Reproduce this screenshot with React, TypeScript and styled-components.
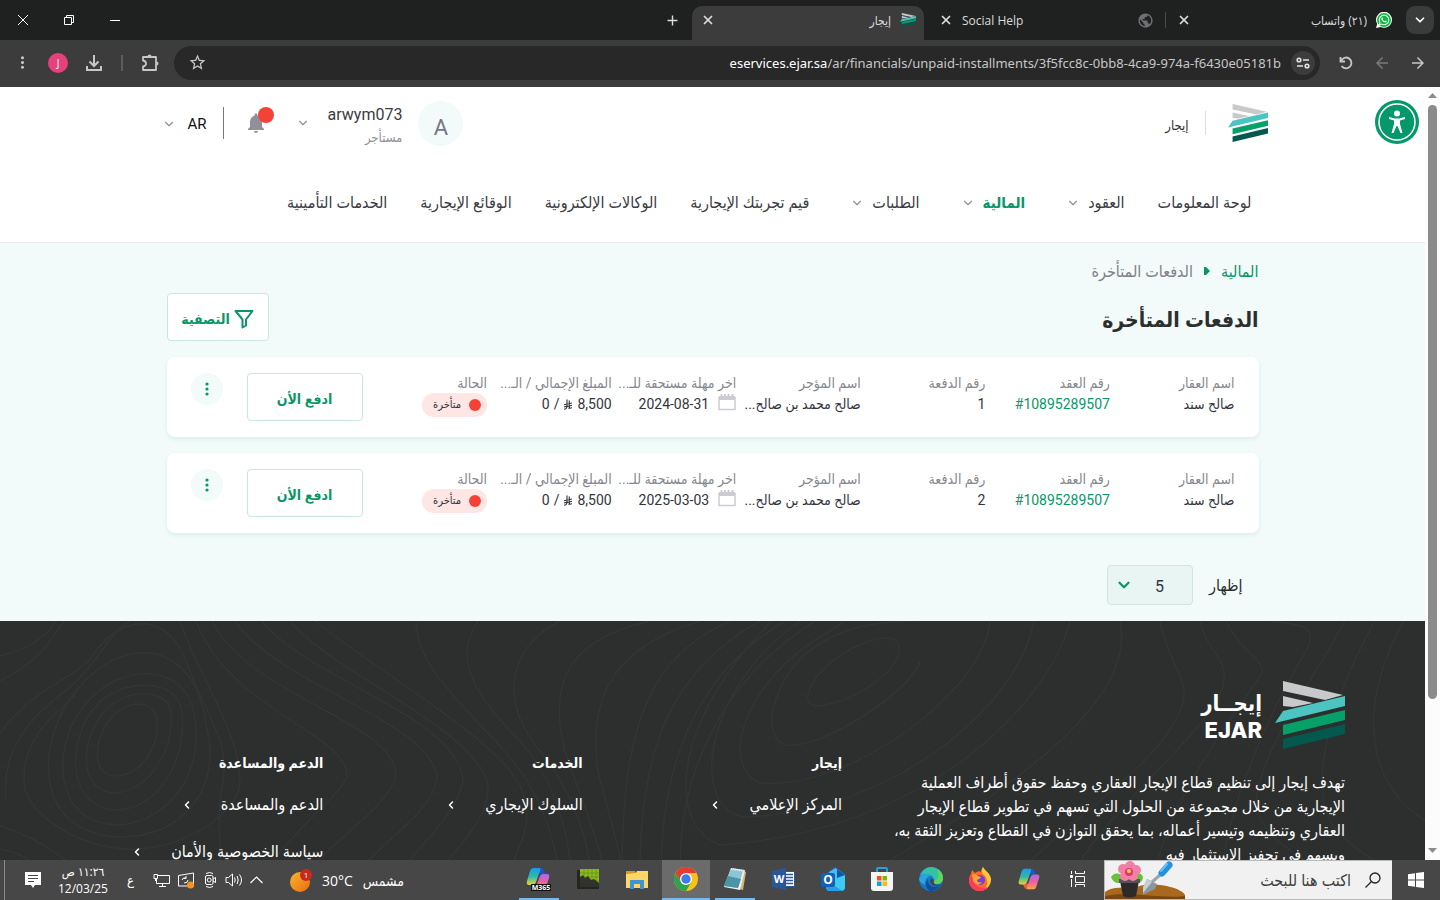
import React from 'react';
import styled, { createGlobalStyle } from 'styled-components';
import {
    MdAdd,
    MdArrowBack,
    MdArrowForward,
    MdMoreVert,
    MdNotifications,
    MdPublic,
    MdStarBorder,
} from 'react-icons/md';
import { FaWhatsapp } from 'react-icons/fa';
import { ChevronDown, ChevronLeft, X } from 'lucide-react';

const pageFont = `Roboto, 'DejaVu Sans Condensed', 'DejaVu Sans', sans-serif`;
const systemFont = `'Open Sans', 'DejaVu Sans Condensed', 'DejaVu Sans', sans-serif`;

const green = '#0a9668';

const GlobalStyle = createGlobalStyle`
    * {
        box-sizing: border-box;
    }
    html, body, #root {
        height: 100%;
    }
    body {
        margin: 0;
        overflow: hidden;
        font-family: ${pageFont};
        color: #2d2e2e;
    }
    button, input, select {
        font: inherit;
        color: inherit;
    }
    button {
        border: none;
        background: none;
        padding: 0;
        cursor: pointer;
    }
    a {
        color: inherit;
        text-decoration: none;
    }
    svg {
        display: block;
        flex-shrink: 0;
    }
    ul, dl, dd, p, h1, h2 {
        margin: 0;
        padding: 0;
        list-style: none;
    }
`;

const Desktop = styled.div`
    display: grid;
    grid-template-columns: minmax(0, 1fr);
    grid-template-rows: auto auto minmax(0, 1fr) auto;
    height: 100%;
`;

/* ---------- browser ---------- */

const TabStrip = styled.div`
    display: flex;
    align-items: stretch;
    height: 40px;
    padding-right: 6px;
    background: #1f2121;
    color: #dcdcdc;
    font-family: ${systemFont};
    font-size: 12px;
`;

const TabSearch = styled.button`
    display: flex;
    align-items: center;
    justify-content: center;
    align-self: center;
    width: 28px;
    height: 28px;
    margin-left: 6px;
    border-radius: 9px;
    background: #3a3b3b;
    color: #fff;
`;

const Tab = styled.div<{ $active?: boolean }>`
    display: flex;
    align-items: center;
    gap: 9px;
    width: ${props => (props.$active ? 232 : 238)}px;
    margin-top: ${props => (props.$active ? 6 : 0)}px;
    padding: 0 8px 0 ${props => (props.$active ? 9 : 15)}px;
    padding-bottom: ${props => (props.$active ? 6 : 0)}px;
    border-radius: 10px 10px 0 0;
    background: ${props => (props.$active ? '#3c3c3c' : 'transparent')};
`;

const TabTitle = styled.span<{ $ltr?: boolean }>`
    flex: 1;
    direction: ${props => (props.$ltr ? 'ltr' : 'rtl')};
    white-space: nowrap;
    overflow: hidden;
`;

const TabClose = styled.button`
    display: flex;
`;

const TabDivider = styled.span`
    align-self: center;
    width: 1px;
    height: 16px;
    margin: 0 -4px 0 3px;
    background: #4a4b4b;
`;

const NewTab = styled.button`
    display: flex;
    align-items: center;
    margin: 0 11px;
    color: #dcdcdc;
`;

const WindowControls = styled.div`
    display: flex;
    margin-right: auto;
`;

const WindowControl = styled.button`
    display: flex;
    align-items: center;
    justify-content: center;
    width: 46px;
    color: #fff;
`;

const Toolbar = styled.div`
    display: flex;
    align-items: center;
    height: 47px;
    padding: 0 4px 2px;
    background: #3c3c3c;
    color: #c7c7c7;
`;

const ToolButton = styled.button<{ $dim?: boolean }>`
    display: flex;
    align-items: center;
    justify-content: center;
    width: 36px;
    height: 34px;
    opacity: ${props => (props.$dim ? 0.45 : 1)};
`;

const ToolDivider = styled.span`
    width: 2px;
    height: 16px;
    margin: 0 9px;
    background: #5c5c5c;
`;

const Profile = styled.button`
    width: 20px;
    height: 20px;
    margin: 0 8px;
    border-radius: 50%;
    background: #e8407d;
    color: #fff;
    font-family: ${systemFont};
    font-size: 10px;
`;

const AddressBar = styled.div`
    display: flex;
    align-items: center;
    flex: 1;
    height: 34px;
    margin: 0 8px 0 6px;
    padding: 0 5px 0 14px;
    border-radius: 17px;
    background: #282828;
`;

const SiteInfo = styled.button`
    display: flex;
    align-items: center;
    justify-content: center;
    width: 24px;
    height: 24px;
    border-radius: 50%;
    background: #3c3c3c;
    color: #e3e3e3;
`;

const Address = styled.div`
    flex: 1;
    margin: 0 10px;
    direction: ltr;
    text-align: right;
    white-space: nowrap;
    color: #c7c7c7;
    font-family: 'Noto Sans', ${systemFont};
    font-size: 13px;
`;

const Host = styled.span`
    color: #fff;
`;

/* ---------- page ---------- */

const Viewport = styled.div`
    position: relative;
    display: flex;
    min-height: 0;
    overflow: hidden;
`;

const Page = styled.div`
    display: flex;
    flex-direction: column;
    flex: 1;
    min-width: 0;
    overflow: hidden;
    background: #f2fbfa;
`;

const Scrollbar = styled.div`
    display: flex;
    flex-direction: column;
    align-items: center;
    width: 15px;
    padding: 6px 0;
    background: #fcfcfc;
`;

const ScrollThumb = styled.div`
    flex: 0 1 594px;
    width: 9px;
    margin: 6px 0 auto;
    border-radius: 5px;
    background: #8b8b8b;
`;

const AccessibilityButton = styled.button`
    position: absolute;
    top: 13px;
    right: 21px;
`;

const Header = styled.header`
    flex-shrink: 0;
    background: #fff;
    border-bottom: 1px solid #e3ecec;
`;

const HeaderTop = styled.div`
    display: flex;
    align-items: center;
    max-width: 1110px;
    height: 72px;
    margin: 0 auto;
    padding-left: 4px;
`;

const BrandLink = styled.a`
    display: flex;
    align-items: center;
    gap: 16px;
    font-size: 13px;
`;

const BrandText = styled.span`
    padding-top: 4px;
`;

const Rule = styled.span`
    width: 1px;
    height: 32px;
    background: #77787c;
`;

const BrandRule = styled(Rule)`
    height: 24px;
    margin-right: 6px;
    background: #dcdfe2;
`;

const UserButton = styled.button`
    display: flex;
    align-items: center;
    gap: 16px;
    margin-right: auto;
    color: #8f909a;
`;

const Avatar = styled.span`
    display: flex;
    align-items: center;
    justify-content: center;
    width: 45px;
    height: 45px;
    padding-top: 8px;
    border-radius: 50%;
    background: #f2fbfa;
    color: #77787f;
    font-size: 22px;
`;

const UserText = styled.span`
    display: flex;
    flex-direction: column;
    align-items: flex-start;
    gap: 3px;
    padding: 7px 0 0 2px;
    font-size: 13px;
    line-height: 20px;
`;

const UserName = styled.span`
    color: #3b3b44;
    font-size: 16px;
`;

const BellButton = styled.button`
    position: relative;
    margin: 0 28px 0 20px;
    color: #8f909a;
`;

const BellDot = styled.span`
    position: absolute;
    top: -4px;
    right: -6px;
    width: 16px;
    height: 16px;
    border-radius: 50%;
    background: #f44336;
`;

const LanguageButton = styled.button`
    display: flex;
    align-items: center;
    gap: 12px;
    margin-right: 16px;
    padding-top: 2px;
    font-size: 15px;
    color: #111;
`;

const MutedChevron = styled(ChevronDown)`
    color: #8f909a;
`;

const Nav = styled.nav`
    display: flex;
    align-items: center;
    gap: 33px;
    max-width: 1110px;
    height: 83px;
    margin: 0 auto;
    padding: 4px 16px 0 0;
`;

const NavLink = styled.a<{ $active?: boolean; $menu?: boolean }>`
    display: flex;
    align-items: center;
    gap: 8px;
    margin-left: ${props => (props.$menu ? 8 : 0)}px;
    white-space: nowrap;
    font-size: ${props => (props.$active ? 15 : 16)}px;
    font-weight: ${props => (props.$active ? 700 : 400)};
    color: ${props => (props.$active ? green : '#3b3b44')};
`;

const Main = styled.main`
    flex-shrink: 0;
    width: 100%;
    max-width: 1092px;
    margin: 0 auto;
    padding: 16px 0;
`;

const Breadcrumb = styled.nav`
    display: flex;
    align-items: center;
    gap: 11px;
    height: 24px;
    font-size: 16px;
    color: #7f8088;
`;

const BreadcrumbLink = styled.a`
    color: ${green};
`;

const TitleRow = styled.div`
    display: flex;
    align-items: center;
    justify-content: space-between;
    margin: 10px 0 16px;
`;

const Title = styled.h1`
    padding-top: 6px;
    font-size: 21px;
    line-height: 32px;
`;

const OutlineButton = styled.button`
    display: flex;
    align-items: center;
    justify-content: center;
    gap: 4px;
    width: 116px;
    height: 48px;
    padding-top: 4px;
    border: 1px solid #cbe5e0;
    border-radius: 4px;
    background: #fff;
    color: ${green};
    font-size: 14px;
    font-weight: 700;
`;

const FilterButton = styled(OutlineButton)`
    width: 102px;
`;

const CardList = styled.ul`
    display: flex;
    flex-direction: column;
    gap: 16px;
`;

const Card = styled.li`
    display: flex;
    align-items: flex-start;
    gap: 24px;
    height: 80px;
    padding: 16px 24px;
    border-radius: 8px;
    background: #fff;
    box-shadow: 0 2px 4px #d9edea;
`;

const Fields = styled.dl`
    display: grid;
    grid-template-columns: repeat(7, minmax(0, 1fr));
    flex: 1;
    margin-left: -24px;
`;

const Field = styled.div`
    min-width: 0;
    white-space: nowrap;
    line-height: 21px;
`;

const FieldLabel = styled.dt`
    font-size: 14px;
    color: #85868e;
`;

const FieldValue = styled.dd`
    display: flex;
    align-items: center;
    gap: 4px;
    height: 21px;
    font-size: 14px;
    color: #33343b;
`;

const DateValue = styled(FieldValue)`
    gap: 9px;

    svg {
        margin-bottom: 6px;
    }
`;

const ContractLink = styled.a`
    color: ${green};
`;

const Status = styled.span`
    display: flex;
    align-items: center;
    gap: 8px;
    height: 24px;
    padding: 0 6px 0 11px;
    border-radius: 12px;
    background: #fde6e4;
    font-size: 11px;
`;

const StatusDot = styled.span`
    width: 12px;
    height: 12px;
    border-radius: 50%;
    background: #f44336;
`;

const MoreButton = styled.button`
    display: flex;
    align-items: center;
    justify-content: center;
    width: 32px;
    height: 32px;
    border-radius: 50%;
    background: #f2fbfa;
    color: ${green};
`;

const PageSize = styled.label`
    display: flex;
    align-items: center;
    gap: 16px;
    margin-top: 32px;
    padding-right: 16px;
    font-size: 16px;
`;

const SelectBox = styled.span`
    position: relative;
    width: 86px;
    color: ${green};

    svg {
        position: absolute;
        top: 11px;
        left: 8px;
        pointer-events: none;
    }
`;

const Select = styled.select`
    appearance: none;
    width: 100%;
    height: 40px;
    padding: 3px 28px 0 0;
    border: 1px solid #cfe5e1;
    border-radius: 4px;
    background: #e8f5f3;
    color: #33343b;
    font-size: 16px;
`;

/* ---------- footer ---------- */

const Footer = styled.footer`
    position: relative;
    flex: 1 0 auto;
    padding: 60px 80px 0;
    background: #2d2e2e;
    color: #fff;
`;

const Contours = styled.svg`
    position: absolute;
    inset: 0;
    width: 100%;
    fill: none;
    stroke: #333535;
    stroke-width: 1.5;
`;

const FooterGrid = styled.div`
    position: relative;
    display: grid;
    grid-template-columns: 487px repeat(3, minmax(0, 1fr));
    column-gap: 16px;
`;

const FooterBrand = styled.div`
    display: flex;
    align-items: center;
    gap: 13px;
    height: 68px;
    margin-bottom: 22px;
`;

const WordMark = styled.div`
    display: flex;
    flex-direction: column;
    padding-top: 3px;
    font-weight: 700;
    font-size: 22px;
    line-height: 26px;
`;

const LatinMark = styled.span`
    font-family: Inter, sans-serif;
    font-weight: 800;
`;

const FooterText = styled.p`
    white-space: nowrap;
    font-size: 16px;
    line-height: 24px;
`;

const FooterColumn = styled.div`
    padding-top: 70px;
    font-size: 16px;
    line-height: 24px;
`;

const FooterHeading = styled.h2`
    margin-bottom: 18px;
    font-size: 14px;
    font-weight: 700;
`;

const FooterItem = styled.li`
    margin-bottom: 23px;
`;

const FooterLink = styled.a`
    display: flex;
    align-items: center;
    gap: 28px;
    white-space: nowrap;
`;

/* ---------- taskbar ---------- */

const Taskbar = styled.div`
    display: flex;
    align-items: stretch;
    height: 40px;
    background: #474747;
    color: #fff;
    font-family: ${systemFont};
    font-size: 13px;
`;

const StartButton = styled.button`
    display: flex;
    align-items: center;
    justify-content: center;
    width: 48px;
`;

const SearchBox = styled.label`
    display: flex;
    align-items: center;
    width: 288px;
    padding-right: 11px;
    background: #f1f1f1;
    border: 1px solid #b9b9b9;
    border-right-width: 0;
    color: #222;
`;

const SearchInput = styled.input`
    flex: 1;
    min-width: 0;
    margin-right: 12px;
    border: none;
    background: none;
    outline: none;
    font-size: 16px;

    &::placeholder {
        color: #3d3d3d;
        opacity: 1;
    }
`;

const Apps = styled.div`
    display: flex;
    gap: 1px;
    padding-right: 2px;
`;

const AppButton = styled.button<{ $open?: boolean; $focused?: boolean }>`
    display: flex;
    align-items: center;
    justify-content: center;
    width: ${props => (props.$open && !props.$focused ? 40 : 48)}px;
    margin: 0 ${props => (props.$open && !props.$focused ? 4 : 0)}px;
    border-bottom: 2px solid ${props => (props.$open ? '#76b9ed' : 'transparent')};
    background: ${props => (props.$focused ? '#6b6b6b' : 'transparent')};
`;

const Tray = styled.div`
    display: flex;
    align-items: center;
    gap: 7px;
    margin-right: auto;
    padding-left: 4px;
`;

const Weather = styled.button`
    display: flex;
    align-items: center;
    gap: 10px;
    margin-left: 20px;
    font-size: 14px;
`;

const Language = styled.span`
    margin: 0 12px 0 8px;
`;

const Clock = styled.div`
    display: flex;
    flex-direction: column;
    align-items: center;
    margin: 0 4px 0 10px;
    font-size: 12px;
    line-height: 17px;
`;

const TrayEdge = styled.span`
    width: 1px;
    height: 100%;
    margin-right: 13px;
    background: #8a8a8a;
`;

const EjarMark = ({ width, height }: { width: number; height: number }) => (
    <svg width={width} height={height} viewBox="0 0 70 68" preserveAspectRatio="none" aria-hidden="true">
        <path fill="#c8c9cb" d="M8 0L68 14 50 19 8 10ZM8 15L38 22 18 26 8 25Z" />
        <path fill="#4bc4c2" d="M70 15V25L0 42 8 30Z" />
        <path fill="#06a06b" d="M70 29V39L8 54V44Z" />
        <path fill="#03594e" d="M70 43V53L8 68V58Z" />
    </svg>
);

const SmallChevron = () => <MutedChevron size={14} strokeWidth={2} />;

const ContourLines = () => (
    <Contours viewBox="0 0 1425 279" aria-hidden="true">
        <path d="M157 100C155 78 128 78 112 96C92 118 92 155 115 155C140 155 160 126 157 100Z" />
        <path d="M171 92C168 66 125 66 103 92C80 120 78 172 116 172C148 170 174 130 171 92Z" />
        <path d="M182 92C180 56 120 56 95 86C66 120 66 189 118 189C160 186 186 140 182 92Z" />
        <path d="M194 92C185 42 122 42 88 80C52 118 48 204 120 204C170 200 206 150 194 92Z" />
        <path d="M206 104C196 20 124 10 76 70C36 118 30 216 124 216C190 214 222 160 206 104Z" />
        <path d="M0 60C40 40 50 20 64 0M0 35C30 28 48 14 56 0M0 112C40 60 76 60 96 30C124 -8 168 -8 186 40C206 96 232 120 222 166C214 206 226 220 216 279" />
        <path d="M0 205C50 220 80 250 110 279M6 180C0 120 40 90 70 66C100 40 110 10 130 0M0 228C30 234 50 250 70 279" />
        <path d="M24 162C22 120 50 96 76 74M24 162C24 190 80 232 140 228C190 224 240 190 240 160C240 110 200 60 180 0" />
        <path d="M196 0C230 90 345 110 347 155C340 180 270 220 256 279" />
        <path d="M212 0C250 76 394 100 396 154C390 190 310 230 290 279" />
        <path d="M235 0C280 66 434 100 437 158C430 200 360 230 340 279" />
        <path d="M262 0C310 60 460 96 463 160C456 200 400 240 380 279" />
        <path d="M290 0C330 50 480 110 488 165C490 205 440 240 420 279" />
        <path d="M315 0C390 60 520 130 525 180C535 220 500 250 500 279" />
        <path d="M416 0C416 60 500 110 530 165C550 200 560 240 562 279" />
        <path d="M478 0C450 40 480 80 520 120C560 165 570 220 575 279" />
        <path d="M560 0C500 30 505 90 540 130C580 180 590 230 595 279" />
        <path d="M650 0C560 20 550 70 565 130C585 190 605 230 608 279" />
        <path d="M700 0C600 30 590 90 598 150C610 200 625 240 624 279" />
        <path d="M730 0C640 40 620 120 622 279M760 0C670 50 636 130 640 279M785 0C700 50 655 140 662 279M815 0C720 60 670 160 682 279" />
        <path d="M898 22C890 8 842 26 820 52C800 78 806 88 826 84C862 76 906 46 898 22Z" />
        <path d="M920 40C912 70 820 130 785 124C764 116 768 74 800 38C836 4 880 0 920 0" />
        <path d="M990 0C984 70 850 170 760 162C720 146 740 60 830 10L845 0M1034 0C1020 80 900 190 745 196C690 190 700 70 800 0" />
        <path d="M1070 0C1050 80 930 210 720 224C660 200 680 90 772 0M1120 0C1140 90 980 190 820 279M1160 0C1170 50 1194 60 1180 90C1150 160 1040 210 1000 279" />
        <path d="M1200 0C1210 40 1234 36 1220 74C1190 130 1090 200 1060 279M1226 0C1240 30 1266 40 1262 52C1240 90 1160 180 1150 279M1270 0C1300 4 1320 4 1306 30C1276 80 1220 190 1220 279" />
        <path d="M1345 0C1300 80 1262 130 1256 180C1260 230 1330 240 1345 279M1375 0C1330 80 1310 160 1330 200C1350 230 1390 250 1425 262M1404 0C1370 60 1350 150 1425 200" />
    </Contours>
);

const RiyalIcon = () => (
    <svg width="10" height="11" viewBox="0 0 20 22" fill="none" stroke="#33343b" strokeWidth="2.200" aria-hidden="true">
        <path d="M8 1V14L2 16M12.500 3V18M2 11.500L18 8M8 15L18 12.500M2 20.500L6 19.500 8 15.500M11 19L18 17.500" />
    </svg>
);

const CalendarIcon = () => (
    <svg width="18" height="18" viewBox="0 0 18 18" fill="none" stroke="#cdcbd2" aria-hidden="true">
        <path strokeWidth="1.500" d="M1 4V16.500H17V4" />
        <path strokeWidth="4" d="M1 5H17" />
        <path strokeWidth="2" d="M3.500 1V4M7 1V4M10.500 1V4M14.500 1V4" />
    </svg>
);

const installments = [
    { payment: '1', due: '2024-08-31' },
    { payment: '2', due: '2025-03-03' },
];

const navItems = [
    { label: 'لوحة المعلومات' },
    { label: 'العقود', menu: true },
    { label: 'المالية', menu: true, active: true },
    { label: 'الطلبات', menu: true },
    { label: 'قيم تجربتك الإيجارية' },
    { label: 'الوكالات الإلكترونية' },
    { label: 'الوقائع الإيجارية' },
    { label: 'الخدمات التأمينية' },
];

const footerColumns = [
    { heading: 'إيجار', links: ['المركز الإعلامي'] },
    { heading: 'الخدمات', links: ['السلوك الإيجاري'] },
    { heading: 'الدعم والمساعدة', links: ['الدعم والمساعدة', 'سياسة الخصوصية والأمان'] },
];

const BrowserChrome = () => (
    <>
        <TabStrip>
            <TabSearch aria-label="البحث في علامات التبويب">
                <ChevronDown size={14} strokeWidth={3} />
            </TabSearch>
            <Tab>
                <svg width="16" height="16" viewBox="0 0 16 16" aria-hidden="true">
                    <path fill="#fff" d="M0 16L1.200 12A8 8 0 1 1 4.500 15Z" />
                    <circle cx="8" cy="8" r="7" fill="#12b83e" />
                    <FaWhatsapp x={2} y={2} size={12} color="#fff" />
                </svg>
                <TabTitle>(٢١) واتساب</TabTitle>
                <TabClose aria-label="إغلاق"><X size={14} strokeWidth={3} /></TabClose>
            </Tab>
            <TabDivider />
            <Tab>
                <MdPublic size={17} color="#6e7073" />
                <TabTitle $ltr>Social Help</TabTitle>
                <TabClose aria-label="إغلاق"><X size={14} strokeWidth={3} /></TabClose>
            </Tab>
            <Tab $active>
                <EjarMark width={16} height={14} />
                <TabTitle>إيجار</TabTitle>
                <TabClose aria-label="إغلاق"><X size={14} strokeWidth={3} /></TabClose>
            </Tab>
            <NewTab aria-label="علامة تبويب جديدة"><MdAdd size={17} /></NewTab>
            <WindowControls>
                <WindowControl aria-label="تصغير">
                    <svg width="10" height="10" stroke="currentColor"><path d="M0 5.500H10" /></svg>
                </WindowControl>
                <WindowControl aria-label="استعادة">
                    <svg width="10" height="10" fill="none" stroke="currentColor">
                        <path d="M.5 2.500H7.500V9.500H.5ZM2.500 2.500V.5H9.500V7.500H7.500" />
                    </svg>
                </WindowControl>
                <WindowControl aria-label="إغلاق النافذة">
                    <svg width="10" height="10" stroke="currentColor"><path d="M0 0L10 10M10 0L0 10" /></svg>
                </WindowControl>
            </WindowControls>
        </TabStrip>
        <Toolbar>
            <ToolButton aria-label="رجوع"><MdArrowForward size={18} /></ToolButton>
            <ToolButton $dim aria-label="تقدم"><MdArrowBack size={18} /></ToolButton>
            <ToolButton aria-label="إعادة تحميل">
                <svg width="14" height="14" viewBox="0 0 14 14" fill="none" stroke="currentColor" strokeWidth="1.800">
                    <path d="M1.500 1V5.500H6M2 5A5.400 5.400 0 1 1 2.600 10" />
                </svg>
            </ToolButton>
            <AddressBar>
                <SiteInfo aria-label="معلومات الموقع">
                    <svg width="14" height="12" viewBox="0 0 14 12" fill="none" stroke="currentColor" strokeWidth="1.600">
                        <circle cx="3" cy="3" r="1.800" />
                        <circle cx="11" cy="9" r="1.800" />
                        <path d="M7 3H13M1 9H7" />
                    </svg>
                </SiteInfo>
                <Address>
                    <Host>eservices.ejar.sa</Host>/ar/financials/unpaid-installments/3f5fcc8c-0bb8-4ca9-974a-f6430e05181b
                </Address>
                <button aria-label="إضافة إلى المفضلة"><MdStarBorder size={19} /></button>
            </AddressBar>
            <ToolButton aria-label="الإضافات">
                <svg width="18" height="18" viewBox="0 0 18 18" fill="none" stroke="currentColor" strokeWidth="1.800" strokeLinejoin="round">
                    <path d="M2 3H15V16H2V12.500Q5 12 5 9.500T2 6.500Z" />
                    <path fill="currentColor" stroke="none" d="M6.500 2.500A2 2 0 0 1 10.500 2.500ZM15.500 7.500A2 2 0 0 1 15.500 11.500Z" />
                </svg>
            </ToolButton>
            <ToolDivider />
            <ToolButton aria-label="التنزيلات">
                <svg width="18" height="18" viewBox="0 0 18 18" fill="none" stroke="currentColor" strokeWidth="2">
                    <path d="M9 1V11.500M4.500 7.500L9 12 13.500 7.500M2 12V16H16V12" />
                </svg>
            </ToolButton>
            <Profile aria-label="الملف الشخصي J">J</Profile>
            <ToolButton aria-label="القائمة"><MdMoreVert size={19} /></ToolButton>
        </Toolbar>
    </>
);

const SiteHeader = () => (
    <Header>
        <HeaderTop>
            <BrandLink href="#home">
                <EjarMark width={40} height={38} />
                <BrandRule />
                <BrandText>إيجار</BrandText>
            </BrandLink>
            <UserButton>
                <Avatar>A</Avatar>
                <UserText>
                    <UserName>arwym073</UserName>
                    مستأجر
                </UserText>
                <SmallChevron />
            </UserButton>
            <BellButton aria-label="الإشعارات">
                <MdNotifications size={24} />
                <BellDot />
            </BellButton>
            <Rule />
            <LanguageButton>
                AR
                <SmallChevron />
            </LanguageButton>
        </HeaderTop>
        <Nav>
            {navItems.map(item => (
                <NavLink key={item.label} href="#nav" $active={item.active} $menu={item.menu}>
                    {item.label}
                    {item.menu && <SmallChevron />}
                </NavLink>
            ))}
        </Nav>
    </Header>
);

const Installments = () => (
    <Main>
        <Breadcrumb>
            <BreadcrumbLink href="#financials">المالية</BreadcrumbLink>
            <svg width="6" height="8" viewBox="0 0 6 8" fill={green}><path d="M0 0H2L6 4 2 8H0Z" /></svg>
            <span>الدفعات المتأخرة</span>
        </Breadcrumb>
        <TitleRow>
            <Title>الدفعات المتأخرة</Title>
            <FilterButton>
                <svg width="20" height="20" viewBox="0 0 20 20" fill="none" stroke="currentColor" strokeWidth="2" strokeLinejoin="round">
                    <path d="M1.500 2H18.500L12 10.500V16.500L8.500 18.500V10.500Z" />
                </svg>
                التصفية
            </FilterButton>
        </TitleRow>
        <CardList>
            {installments.map(item => (
                <Card key={item.payment}>
                    <Fields>
                        <Field>
                            <FieldLabel>اسم العقار</FieldLabel>
                            <FieldValue>صالح سند</FieldValue>
                        </Field>
                        <Field>
                            <FieldLabel>رقم العقد</FieldLabel>
                            <FieldValue><ContractLink href="#contract" dir="ltr">#10895289507</ContractLink></FieldValue>
                        </Field>
                        <Field>
                            <FieldLabel>رقم الدفعة</FieldLabel>
                            <FieldValue>{item.payment}</FieldValue>
                        </Field>
                        <Field>
                            <FieldLabel>اسم المؤجر</FieldLabel>
                            <FieldValue>صالح محمد بن صالح...</FieldValue>
                        </Field>
                        <Field>
                            <FieldLabel>اخر مهلة مستحقة للـ...</FieldLabel>
                            <DateValue><CalendarIcon />{item.due}</DateValue>
                        </Field>
                        <Field>
                            <FieldLabel>المبلغ الإجمالي / الـ...</FieldLabel>
                            <FieldValue><span>8,500</span><RiyalIcon /><span>/</span><span>0</span></FieldValue>
                        </Field>
                        <Field>
                            <FieldLabel>الحالة</FieldLabel>
                            <FieldValue><Status><StatusDot />متأخرة</Status></FieldValue>
                        </Field>
                    </Fields>
                    <OutlineButton>ادفع الأن</OutlineButton>
                    <MoreButton aria-label="المزيد">
                        <svg width="4" height="14" fill="currentColor">
                            <circle cx="2" cy="2" r="1.600" />
                            <circle cx="2" cy="7" r="1.600" />
                            <circle cx="2" cy="12" r="1.600" />
                        </svg>
                    </MoreButton>
                </Card>
            ))}
        </CardList>
        <PageSize>
            إظهار
            <SelectBox>
                <Select defaultValue="5">
                    <option value="5">5</option>
                    <option value="10">10</option>
                </Select>
                <ChevronDown size={18} strokeWidth={3} />
            </SelectBox>
        </PageSize>
    </Main>
);

const SiteFooter = () => (
    <Footer>
        <ContourLines />
        <FooterGrid>
            <div>
                <FooterBrand>
                    <EjarMark width={70} height={68} />
                    <WordMark>
                        <span>إيجــار</span>
                        <LatinMark>EJAR</LatinMark>
                    </WordMark>
                </FooterBrand>
                <FooterText>
                    تهدف إيجار إلى تنظيم قطاع الإيجار العقاري وحفظ حقوق أطراف العملية<br />
                    الإيجارية من خلال مجموعة من الحلول التي تسهم في تطوير قطاع الإيجار<br />
                    العقاري وتنظيمه وتيسير أعماله، بما يحقق التوازن في القطاع وتعزيز الثقة به،<br />
                    ويسهم في تحفيز الاستثمار فيه
                </FooterText>
            </div>
            {footerColumns.map(column => (
                <FooterColumn key={column.heading}>
                    <FooterHeading>{column.heading}</FooterHeading>
                    <ul>
                        {column.links.map(link => (
                            <FooterItem key={link}>
                                <FooterLink href="#footer">
                                    {link}
                                    <ChevronLeft size={12} strokeWidth={3} />
                                </FooterLink>
                            </FooterItem>
                        ))}
                    </ul>
                </FooterColumn>
            ))}
        </FooterGrid>
    </Footer>
);

const GardenArt = () => (
    <svg width="80" height="38" viewBox="0 0 80 38" aria-hidden="true">
        <path fill="#a8681d" d="M0 38V31C8 25 20 27 32 26C46 20 76 26 80 34V38Z" />
        <path fill="#7a4713" d="M0 38V35C20 30 60 38 80 35V38Z" />
        <path fill="#6cbf3c" d="M6 16C10 10 18 12 20 20C14 24 8 22 6 16ZM26 20C28 12 36 10 38 16C38 22 32 24 26 20Z" />
        <path fill="#2d2a2c" d="M15 20H34L31 35Q24 38 18 35Z" />
        <path fill="#57525a" d="M14 18H35V22H14Z" />
        <g fill="#f27fa6">
            <circle cx="18" cy="8" r="5" />
            <circle cx="25" cy="5" r="5" />
            <circle cx="31" cy="9" r="5" />
            <circle cx="28" cy="15" r="5" />
            <circle cx="20" cy="15" r="5" />
        </g>
        <circle cx="24" cy="11" r="4" fill="#e2366d" />
        <circle cx="24" cy="10" r="2" fill="#fbd34a" />
        <path fill="#8b979f" d="M42 18L52 23 50 28 38 34 38 27Z" />
        <path fill="#c5d0d6" d="M42 18L47 21 38 32V26Z" />
        <path stroke="#9aa6ad" strokeWidth="3" d="M47 21L55 14" />
        <path stroke="#2492dd" strokeWidth="7" strokeLinecap="round" d="M57 12L64 4" />
        <path stroke="#6cc0f5" strokeWidth="2" strokeLinecap="round" d="M56 10L62 3" />
    </svg>
);

const CopilotGlyph = () => (
    <>
        <defs>
            <linearGradient id="ribbonCool" x1="0" y1="0" x2="0" y2="1">
                <stop offset="0" stopColor="#1a9bf0" />
                <stop offset=".5" stopColor="#2fb8a8" />
                <stop offset="1" stopColor="#ecd52a" />
            </linearGradient>
            <linearGradient id="ribbonWarm" x1="0" y1="0" x2="0" y2="1">
                <stop offset="0" stopColor="#a56bf5" />
                <stop offset=".5" stopColor="#ee5fa0" />
                <stop offset="1" stopColor="#fba24a" />
            </linearGradient>
        </defs>
        <path fill="#1d57c9" d="M10 2H15Q17 2 18 5L19 8H14Z" />
        <path fill="#e8603c" d="M5 18H11L14 24H10Q8 24 7 22Z" />
        <path fill="url(#ribbonCool)" d="M7 2H13Q15 2 14 5L10 16Q9 19 6 19H3Q0 19 1 15L4 5Q5 2 7 2Z" />
        <path fill="url(#ribbonWarm)" d="M17 8H21Q24 8 23 12L20 21Q19 24 17 24H11Q9 24 10 21L14 10Q15 8 17 8Z" />
    </>
);

const TaskViewIcon = () => (
    <svg width="16" height="16" viewBox="0 0 16 16" fill="none" stroke="#fff" aria-hidden="true">
        <path d="M5.500 0V2.500H14.500V0M5.500 5.500H14.500V11.500H5.500ZM5.500 16V13.500H14.500V16M1.500 0V3M1.500 8V16" />
        <path fill="#fff" d="M.5 4.500H2.500V6.500H.5Z" />
    </svg>
);

const FirefoxIcon = () => (
    <svg width="24" height="24" viewBox="0 0 24 24" aria-hidden="true">
        <path fill="#ff6a2b" d="M3 7L4 3 7 6C10 4 12 4 13 5C13 3 14 1 15 0C17 4 22 6 23 12C23 19 18 24 12 24C5 24 1 19 1 13C1 11 2 8 3 7Z" />
        <path fill="#ffcb34" d="M15 0C17 4 22 6 23 12C23 17 20 21 17 22C21 16 19 11 16 8C14 7 13 4 15 0Z" />
        <path fill="#ff3a5c" d="M1 13C1 19 5 24 12 24C16 24 19 22 20 20C12 23 6 19 5 11L3 8Z" />
        <circle cx="12" cy="13" r="5" fill="#7a3fd6" />
        <path fill="#ffa52f" d="M4 8C7 7 9 8 10 9L13 10C12 12 10 12 9 13C9 15 11 16 14 15C12 19 6 18 5 13Z" />
    </svg>
);

const EdgeIcon = () => (
    <svg width="24" height="24" viewBox="0 0 24 24" aria-hidden="true">
        <circle cx="12" cy="12" r="12" fill="#1478c8" />
        <path fill="#35c1a8" d="M1 9C3 3 8 0 12 0C19 0 24 5 24 11C24 15 21 17 18 17C15 17 14 16 15 14C16 9 7 4 1 9Z" />
        <path fill="#5ed65a" d="M18 2C22 4 24 7 24 11C24 15 21 17 18 17C15 17 14 16 15 14C19 14 21 7 18 2Z" />
        <path fill="#2aa6dc" d="M0 12C2 6 9 6 14 9C9 8 5 13 6 18C2 16 0 14 0 12Z" />
        <path fill="#0d4f9e" d="M9 12C8 18 14 22 21 19C18 23 14 24 11 24C6 21 6 15 9 12Z" />
        <path fill="#474747" d="M15 14C14 16 16 18 19 18L23 17C22 18 21 19 20 19C15 20 11 18 11 14C11 11 15 11 15 14Z" />
    </svg>
);

const StoreIcon = () => (
    <svg width="24" height="24" viewBox="0 0 24 24" aria-hidden="true">
        <path fill="none" stroke="#2b9fd8" strokeWidth="2" d="M7 6V2Q7 1 8 1H16Q17 1 17 2V6" />
        <path fill="#f4f4f4" d="M1 5H23V21Q23 24 20 24H4Q1 24 1 21Z" />
        <path fill="#f25022" d="M7 9H11.500V13.500H7Z" />
        <path fill="#7fba00" d="M12.500 9H17V13.500H12.500Z" />
        <path fill="#00a4ef" d="M7 14.500H11.500V19H7Z" />
        <path fill="#ffb900" d="M12.500 14.500H17V19H12.500Z" />
    </svg>
);

const OutlookIcon = () => (
    <svg width="24" height="24" viewBox="0 0 24 24" aria-hidden="true">
        <path fill="#1a73c9" d="M5 7L14 0 24 7V22H5Z" />
        <path fill="#54b8f0" d="M8 5L15 1 20 9 12 14Z" />
        <path fill="#1157a8" d="M16 3L24 8 16 13Z" />
        <path fill="#3ccbf4" d="M5 15L24 8V20Q24 24 20 24H9Q5 24 5 20Z" />
        <path fill="#2a9de6" d="M5 14L22 24H9Q5 24 5 20Z" />
        <rect y="6" width="14" height="14" rx="2" fill="#0f62b8" />
        <text x="7" y="17" textAnchor="middle" fontSize="12" fontWeight="700" fill="#fff">O</text>
    </svg>
);

const WordIcon = () => (
    <svg width="24" height="22" viewBox="0 0 24 22" aria-hidden="true">
        <path fill="#fff" stroke="#2b579a" d="M11 3.500H22.500V18.500H11Z" />
        <path stroke="#2b579a" strokeWidth="1.500" d="M13 6.500H21M13 9.500H21M13 12.500H21M13 15.500H21" />
        <path fill="#2b579a" d="M0 3L14 0V22L0 19Z" />
        <text x="7" y="15" textAnchor="middle" fontSize="11" fontWeight="700" fill="#fff">W</text>
    </svg>
);

const NotepadIcon = () => (
    <svg width="24" height="24" viewBox="0 0 24 24" aria-hidden="true">
        <path fill="#d9b56b" d="M18 3L23 5 20 23 16 22Z" />
        <path fill="#e9f3f5" d="M8 1L22 3 17 23 1 20Z" />
        <path fill="#8cc6d4" d="M8 2L20 4 15 21 1 19Z" />
        <path fill="#4b93a6" d="M5 9L18 12 15 21 1 19Z" />
        <path stroke="#dfe9ec" strokeWidth="2" strokeDasharray="1 1" d="M8 2L21 4" />
    </svg>
);

const ChromeIcon = () => (
    <svg width="24" height="24" viewBox="0 0 24 24" aria-hidden="true">
        <circle cx="12" cy="12" r="12" fill="#fbc116" />
        <path fill="#e33b2e" d="M1.600 6A12 12 0 0 1 22.400 6H12L6.800 15Z" />
        <path fill="#2da44e" d="M1.600 6A12 12 0 0 0 12 24L17.200 15 12 18 6.800 15Z" />
        <circle cx="12" cy="12" r="6" fill="#fff" />
        <circle cx="12" cy="12" r="4.700" fill="#3b7ded" />
    </svg>
);

const ExplorerIcon = () => (
    <svg width="22" height="19" viewBox="0 0 22 19" aria-hidden="true">
        <path fill="#d9981e" d="M0 1H9L11 4H0Z" />
        <path fill="#ffd667" d="M0 4L10 3 11 1H22V18H0Z" />
        <path fill="#3f94d1" d="M4 10H18V19H14V14H8V19H4Z" />
    </svg>
);

const MonitorIcon = () => (
    <svg width="22" height="22" viewBox="0 0 22 22" aria-hidden="true">
        <path fill="#24261f" d="M0 2H22V21H0Z" />
        <path fill="#88b91f" d="M3 1H22V19H3Z" />
        <path stroke="#5f8a14" strokeWidth=".6" d="M7 1V17M11 1V17M15 1V17M19 1V17M3 5H22M3 9H22M3 13H22" />
        <path fill="#2f332b" d="M3 19V9L6 7 8 10 11 8 14 12 17 11 22 15V19Z" />
    </svg>
);

const M365Icon = () => (
    <svg width="26" height="26" viewBox="0 0 26 26" aria-hidden="true">
        <CopilotGlyph />
        <path fill="#111" d="M5 18H25V25H5Z" />
        <text x="15" y="24" textAnchor="middle" fontSize="7" fontWeight="700" fill="#fff">M365</text>
    </svg>
);

const CopilotIcon = () => (
    <svg width="24" height="24" viewBox="0 0 24 26" aria-hidden="true">
        <CopilotGlyph />
    </svg>
);

const apps = [
    { name: 'عرض المهام', icon: <TaskViewIcon /> },
    { name: 'Copilot', icon: <CopilotIcon /> },
    { name: 'Firefox', icon: <FirefoxIcon /> },
    { name: 'Edge', icon: <EdgeIcon /> },
    { name: 'Store', icon: <StoreIcon /> },
    { name: 'Outlook', icon: <OutlookIcon /> },
    { name: 'Word', icon: <WordIcon /> },
    { name: 'Notepad', icon: <NotepadIcon />, open: true },
    { name: 'Chrome', icon: <ChromeIcon />, open: true, focused: true },
    { name: 'Explorer', icon: <ExplorerIcon /> },
    { name: 'Monitor', icon: <MonitorIcon /> },
    { name: 'M365', icon: <M365Icon />, open: true },
];

const WindowsTaskbar = () => (
    <Taskbar>
        <StartButton aria-label="ابدأ">
            <svg width="16" height="16" viewBox="0 0 16 16" fill="#fff">
                <path d="M0 2.300L7 1.300V7.500H0ZM8 1.100L16 0V7.500H8ZM0 8.500H7V14.700L0 13.700ZM8 8.500H16V16L8 14.900Z" />
            </svg>
        </StartButton>
        <SearchBox>
            <svg width="16" height="16" viewBox="0 0 16 16" fill="none" stroke="#222" strokeWidth="1.300" aria-hidden="true">
                <circle cx="10" cy="6" r="5" />
                <path d="M6.500 9.500L.5 15.500" />
            </svg>
            <SearchInput placeholder="اكتب هنا للبحث" aria-label="اكتب هنا للبحث" />
            <GardenArt />
        </SearchBox>
        <Apps>
            {apps.map(app => (
                <AppButton key={app.name} aria-label={app.name} $open={app.open} $focused={app.focused}>
                    {app.icon}
                </AppButton>
            ))}
        </Apps>
        <Tray>
            <Weather>
                <span>مشمس</span>
                <span dir="ltr">30°C</span>
                <svg width="22" height="23" viewBox="0 0 22 23" aria-hidden="true">
                    <defs>
                        <linearGradient id="sun" x1="0" y1="0" x2="1" y2="1">
                            <stop offset="0" stopColor="#f7b62c" />
                            <stop offset="1" stopColor="#ee6a10" />
                        </linearGradient>
                    </defs>
                    <circle cx="10" cy="13" r="10" fill="url(#sun)" />
                    <circle cx="16" cy="6" r="6" fill="#c42b1c" />
                    <text x="16" y="9" textAnchor="middle" fontSize="8" fill="#fff">1</text>
                </svg>
            </Weather>
            <svg width="13" height="8" viewBox="0 0 13 8" fill="none" stroke="#fff" strokeWidth="1.200" aria-hidden="true">
                <path d="M.5 7L6.500 1 12.500 7" />
            </svg>
            <svg width="18" height="16" viewBox="0 0 18 16" fill="none" stroke="#fff" aria-hidden="true">
                <path d="M1 5.500H3.500L7.500 2V14L3.500 10.500H1ZM9.500 5.500Q11 8 9.500 10.500M12 4Q14.500 8 12 12M14.500 2.500Q18.500 8 14.500 13.500" />
            </svg>
            <svg width="16" height="16" viewBox="0 0 16 16" fill="none" stroke="#fff" aria-hidden="true">
                <path d="M3.500 5Q3.500 3.500 5 3.500H9.500Q11 3.500 11 5V11Q11 12.500 9.500 12.500H5Q3.500 12.500 3.500 11ZM11 7L13.500 5.500V10.500L11 9M4 1.500Q7.500-.5 11 1.500M4 14.500Q7.500 16.500 11 14.500" />
                <circle cx="7.200" cy="8" r="2" />
            </svg>
            <svg width="18" height="17" viewBox="0 0 18 17" fill="none" stroke="#fff" aria-hidden="true">
                <path d="M1.500 3.500L16.500 1V14H1.500ZM5 8Q6 5 9 6M11 8Q11 11 7 11M9 4V6.500H6.500" />
                <circle cx="13.500" cy="13" r="3.500" fill="#f7941d" stroke="none" />
            </svg>
            <svg width="17" height="15" viewBox="0 0 17 15" fill="none" stroke="#fff" aria-hidden="true">
                <path d="M5 2.500H16.500V10.500H3.500V6M9.500 10.500V13.500M6 13.500H13M1 1.500H4.500V5.500H1ZM2.500 5.500V8" />
            </svg>
            <Language>ع</Language>
            <Clock>
                <span>١١:٢٦ ص</span>
                <span dir="ltr">12/03/25</span>
            </Clock>
            <svg width="16" height="16" viewBox="0 0 16 16" aria-hidden="true">
                <path fill="#fff" d="M0 0H16V13H10L8 16 6 13H0Z" />
                <path stroke="#474747" d="M3 3.500H13M3 6.500H13M3 9.500H9" />
            </svg>
            <TrayEdge />
        </Tray>
    </Taskbar>
);

export default function App() {
    return (
        <>
            <GlobalStyle />
            <Desktop dir="rtl">
                <BrowserChrome />
                <Viewport dir="ltr">
                    <Page dir="rtl">
                        <SiteHeader />
                        <Installments />
                        <SiteFooter />
                    </Page>
                    <Scrollbar>
                        <svg width="9" height="6" fill="#8b8b8b"><path d="M0 5L4.500 0 9 5Z" /></svg>
                        <ScrollThumb />
                        <svg width="9" height="6" fill="#8b8b8b"><path d="M0 0L4.500 5 9 0Z" /></svg>
                    </Scrollbar>
                    <AccessibilityButton aria-label="إمكانية الوصول">
                        <svg width="44" height="44" viewBox="0 0 44 44">
                            <circle cx="22" cy="22" r="22" fill="#04986a" />
                            <circle cx="22" cy="22" r="18" fill="none" stroke="#fff" strokeWidth="1.500" />
                            <circle cx="22" cy="13.500" r="3" fill="#fff" />
                            <path fill="#fff" d="M14 17L20 18.500H24L30 17V19L25 20.500V24L27.500 33H25.500L22.500 26H21.500L18.500 33H16.500L19 24V20.500L14 19Z" />
                        </svg>
                    </AccessibilityButton>
                </Viewport>
                <WindowsTaskbar />
            </Desktop>
        </>
    );
}
